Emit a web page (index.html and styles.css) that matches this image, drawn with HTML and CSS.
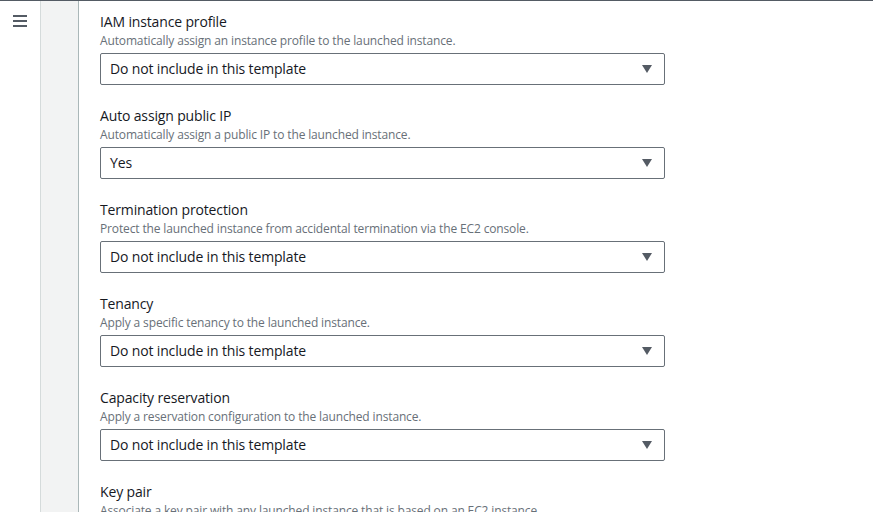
FILE: index.html
```html
<!DOCTYPE html>
<html>
<head>
<meta charset="utf-8">
<link rel="stylesheet" href="styles.css">
</head>
<body>
<div class="page">
  <nav class="rail">
    <svg class="menu" width="14" height="12" viewBox="0 0 14 12"><rect x="0" y="0" width="14" height="2"/><rect x="0" y="5" width="14" height="2"/><rect x="0" y="10" width="14" height="2"/></svg>
  </nav>
  <aside class="panel"></aside>
  <main class="content">
    <div class="field">
      <div class="label">IAM instance profile</div>
      <div class="desc">Automatically assign an instance profile to the launched instance.</div>
      <div class="select"><span>Do not include in this template</span><span class="caret"></span></div>
    </div>
    <div class="field">
      <div class="label">Auto assign public IP</div>
      <div class="desc">Automatically assign a public IP to the launched instance.</div>
      <div class="select"><span>Yes</span><span class="caret"></span></div>
    </div>
    <div class="field">
      <div class="label">Termination protection</div>
      <div class="desc">Protect the launched instance from accidental termination via the EC2 console.</div>
      <div class="select"><span>Do not include in this template</span><span class="caret"></span></div>
    </div>
    <div class="field">
      <div class="label">Tenancy</div>
      <div class="desc">Apply a specific tenancy to the launched instance.</div>
      <div class="select"><span>Do not include in this template</span><span class="caret"></span></div>
    </div>
    <div class="field">
      <div class="label">Capacity reservation</div>
      <div class="desc">Apply a reservation configuration to the launched instance.</div>
      <div class="select"><span>Do not include in this template</span><span class="caret"></span></div>
    </div>
    <div class="field">
      <div class="label">Key pair</div>
      <div class="desc">Associate a key pair with any launched instance that is based on an EC2 instance.</div>
    </div>
  </main>
</div>
</body>
</html>
```
FILE: styles.css
```css
html, body {
  margin: 0;
  padding: 0;
  background: #fff;
  overflow: hidden;
}
body {
  font-family: "Open Sans", "Noto Sans", sans-serif;
  color: #16191f;
  height: 512px;
}
.page {
  display: flex;
  height: 512px;
  border-top: 1px solid #545b64;
  box-sizing: border-box;
}
.rail {
  width: 40px;
  flex: none;
  display: flex;
  justify-content: center;
  padding-top: 14px;
  box-sizing: border-box;
}
.menu {
  fill: #545b64;
}
.panel {
  width: 39px;
  flex: none;
  background: #f2f3f3;
  border-left: 1px solid #d5dbdb;
  border-right: 1px solid #aab7b8;
  box-sizing: border-box;
}
.content {
  padding: 10px 0 0 21px;
  flex: 1;
}
.field {
  width: 565px;
  margin-bottom: 20px;
}
.label {
  font-size: 14px;
  line-height: 22px;
  color: #16191f;
  letter-spacing: -0.15px;
}
.desc {
  font-size: 12px;
  line-height: 16px;
  color: #687078;
  letter-spacing: -0.14px;
}
.select {
  margin-top: 4px;
  height: 32px;
  box-sizing: border-box;
  border: 1px solid #687078;
  border-radius: 2px;
  display: flex;
  align-items: center;
  justify-content: space-between;
  padding: 0 12px 1px 9px;
  font-size: 14px;
  letter-spacing: -0.15px;
}
.caret {
  width: 0;
  height: 0;
  border-left: 5px solid transparent;
  border-right: 5px solid transparent;
  border-top: 8px solid #545b64;
}
```
